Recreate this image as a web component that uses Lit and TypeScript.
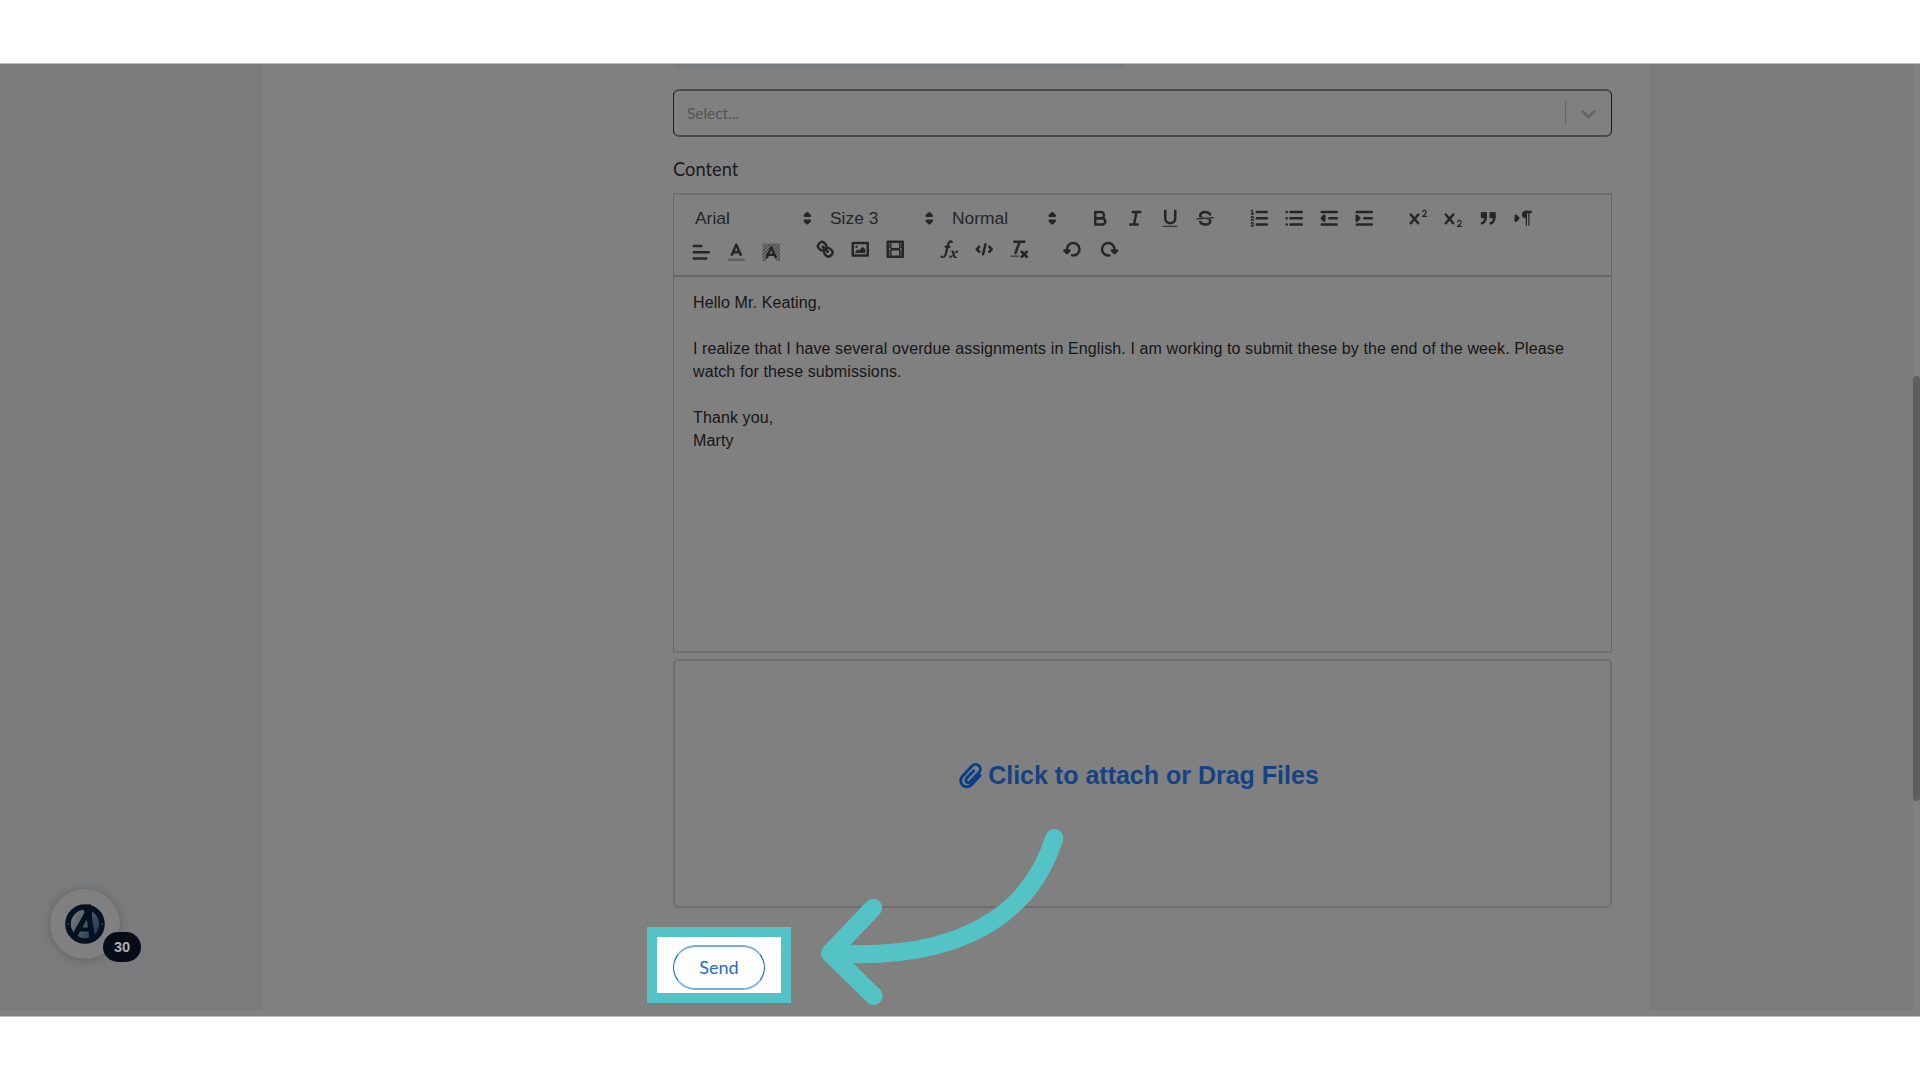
import { LitElement, html, css, svg, SVGTemplateResult } from "lit";
import { customElement, property } from "lit/decorators.js";

const superX =
  "M9.651,5.241a1,1,0,0,0-1.41.108L6,7.964,3.759,5.349a1,1,0,1,0-1.519,1.3L4.683,9.5,2.241,12.35a1,1,0,1,0,1.519,1.3L6,11.036,8.241,13.65a1,1,0,0,0,1.519-1.3L7.317,9.5,9.759,6.651A1,1,0,0,0,9.651,5.241Z";

const icons: Record<string, SVGTemplateResult> = {
  bold: svg`<path class="s" d="M5,4H9.5A2.5,2.5,0,0,1,12,6.5v0A2.5,2.5,0,0,1,9.5,9H5V4Z"/><path class="s" d="M5,9h5.5A2.5,2.5,0,0,1,13,11.5v0A2.5,2.5,0,0,1,10.5,14H5V9Z"/>`,
  italic: svg`<path class="s" d="M7 4H13M5 14H11M8 14L10 4"/>`,
  underline: svg`<path class="s" d="M5,3V9a4.012,4.012,0,0,0,4,4H9a4.012,4.012,0,0,0,4-4V3"/><rect class="f soft" x="3" y="15" width="12" height="1" rx=".5"/>`,
  strike: svg`<path class="s t" d="M15.5 8.5L2.5 9.5"/><path class="f" d="M9.007,8C6.542,7.791,6,7.519,6,6.5,6,5.792,7.283,5,9,5c1.571,0,2.765.679,2.969,1.309a1,1,0,0,0,1.9-.617C13.356,4.106,11.354,3,9,3,6.2,3,4,4.538,4,6.5a3.2,3.2,0,0,0,.5,1.843Z"/><path class="f" d="M8.984,10C11.457,10.208,12,10.479,12,11.5c0,0.708-1.283,1.5-3,1.5-1.571,0-2.765-.679-2.969-1.309a1,1,0,1,0-1.9.617C4.644,13.894,6.646,15,9,15c2.8,0,5-1.538,5-3.5a3.2,3.2,0,0,0-.5-1.843Z"/>`,
  ordered: svg`<path class="s" d="M7 4H15M7 9H15M7 14H15"/><path class="s t" d="M2.5 5.5H4.5"/><path class="f" d="M3.5,6A0.5,0.5,0,0,1,3,5.5V3.085l-0.276.138A0.5,0.5,0,0,1,2.053,3c-0.124-.247-0.023-0.324.224-0.447l1-.5A0.5,0.5,0,0,1,4,2.5v3A0.5,0.5,0,0,1,3.5,6Z"/><path class="s t" d="M4.5,10.5h-2c0-.234,1.85-1.076,1.85-2.234A0.959,0.959,0,0,0,2.5,8.156"/><path class="s t" d="M2.5,14.846a0.959,0.959,0,0,0,1.85-.109A0.7,0.7,0,0,0,3.75,14a0.688,0.688,0,0,0,.6-0.736,0.959,0.959,0,0,0-1.85-.109"/>`,
  bullet: svg`<path class="s" d="M6 4H15M6 9H15M6 14H15M3 4H3.01M3 9H3.01M3 14H3.01"/>`,
  outdent: svg`<path class="s" d="M3 14H15M3 4H15M9 9H15"/><path class="s f" d="M5 7V11L3 9Z"/>`,
  indent: svg`<path class="s" d="M3 14H15M3 4H15M9 9H15"/><path class="s f" d="M3 7V11L5 9Z"/>`,
  sup: svg`<path class="f" d="M15.5,7H13.861a4.015,4.015,0,0,0,1.914-2.975,1.8,1.8,0,0,0-1.6-1.751A1.922,1.922,0,0,0,12.021,3.7a0.5,0.5,0,1,0,.957.291,0.917,0.917,0,0,1,1.053-.725,0.81,0.81,0,0,1,.744.762c0,1.077-1.164,1.925-1.934,2.486A1.423,1.423,0,0,0,12,7.5a0.5,0.5,0,0,0,.5.5h3A0.5,0.5,0,0,0,15.5,7Z"/><path class="f" d="${superX}"/>`,
  sub: svg`<path class="f" transform="translate(0 8)" d="M15.5,7H13.861a4.015,4.015,0,0,0,1.914-2.975,1.8,1.8,0,0,0-1.6-1.751A1.922,1.922,0,0,0,12.021,3.7a0.5,0.5,0,1,0,.957.291,0.917,0.917,0,0,1,1.053-.725,0.81,0.81,0,0,1,.744.762c0,1.077-1.164,1.925-1.934,2.486A1.423,1.423,0,0,0,12,7.5a0.5,0.5,0,0,0,.5.5h3A0.5,0.5,0,0,0,15.5,7Z"/><path class="f" d="${superX}"/>`,
  quote: svg`<rect class="s f" x="4" y="5" width="3" height="3"/><rect class="s f" x="11" y="5" width="3" height="3"/><path class="s f" d="M7,8c0,4.031-3,5-3,5"/><path class="s f" d="M14,8c0,4.031-3,5-3,5"/>`,
  direction: svg`<path class="s f" d="M3 11L5 9L3 7Z"/><path class="s" d="M15 4H11"/><path class="f" d="M11,3a3,3,0,0,0,0,6h1V3H11Z"/><rect class="f" x="11" y="4" width="1" height="11"/><rect class="f" x="13" y="4" width="1" height="11"/>`,
  align: svg`<path class="s" d="M3 9H15M3 14H13M3 4H9"/>`,
  color: svg`<path class="s faint" d="M3 15H15"/><path class="s" d="M5.5 11L9 3L12.5 11M11.63 9H6.38"/>`,
  background: svg`<defs><pattern id="hatch" width="2.6" height="2.6" patternUnits="userSpaceOnUse"><path d="M-.65 .65L.65 -.65M0 2.6L2.6 0M1.95 3.25L3.25 1.95" stroke="#2b2b2b" stroke-width=".7"/></pattern></defs><path fill="url(#hatch)" d="M2 2H16V16H13.2L10.5 5H7.5L4.800 16H2Z"/><path class="s" d="M5.5 13L9 5L12.5 13M11.63 11H6.38"/>`,
  link: svg`<path class="s" d="M7 7L11 11"/><path class="s" d="M8.9,4.577a3.476,3.476,0,0,1,.36,4.679A3.476,3.476,0,0,1,4.577,8.9C3.185,7.5,2.035,6.4,4.217,4.217S7.5,3.185,8.9,4.577Z"/><path class="s" d="M13.423,9.1a3.476,3.476,0,0,0-4.679-.36,3.476,3.476,0,0,0,.36,4.679c1.392,1.392,2.5,2.542,4.679.36S14.815,10.5,13.423,9.1Z"/>`,
  image: svg`<rect class="s" x="3" y="4" width="12" height="10"/><circle class="f" cx="6" cy="7" r="1"/><path class="f" d="M5 12V11L7 9L8 10L11 7L13 9V12Z"/>`,
  video: svg`<rect class="s" x="3" y="3" width="12" height="12"/><path class="f" d="M5 3h1v12h-1zM12 3h1v12h-1zM5 8h8v2h-8zM3 5h3v1h-3zM3 7h3v1h-3zM3 10h3v1h-3zM3 12h3v1h-3zM12 5h3v1h-3zM12 7h3v1h-3zM12 10h3v1h-3zM12 12h3v1h-3z"/>`,
  formula: svg`<path class="f" d="M11.759,2.482a2.561,2.561,0,0,0-3.53.607A7.656,7.656,0,0,0,6.8,6.2C6.109,9.188,5.275,14.677,4.15,14.927a1.545,1.545,0,0,0-1.3-.933A0.922,0.922,0,0,0,2,15.036S1.954,16,4.119,16s3.091-2.691,3.7-5.553c0.177-.826.36-1.726,0.554-2.6L8.775,6.2c0.381-1.421.807-2.521,1.306-2.676a1.014,1.014,0,0,0,1.02.56A0.966,0.966,0,0,0,11.759,2.482Z"/><rect class="f" x="5.15" y="6.2" width="5" height="1.6" rx=".8"/><path class="f" d="M13.663,12.027a1.662,1.662,0,0,1,.266-0.276q0.193,0.069.456,0.138a2.1,2.1,0,0,0,.535.069,1.075,1.075,0,0,0,.767-0.3,1.044,1.044,0,0,0,.314-0.8,0.84,0.84,0,0,0-.238-0.619,0.8,0.8,0,0,0-.594-0.239,1.154,1.154,0,0,0-.781.3,4.607,4.607,0,0,0-.781,1q-0.091.15-.218,0.346l-0.246.38c-0.068-.288-0.137-0.582-0.212-0.885-0.459-1.847-2.494-.984-2.941-0.8-0.482.2-.353,0.647-0.094,0.529a0.869,0.869,0,0,1,1.281.585c0.217,0.751.377,1.436,0.527,2.038a5.688,5.688,0,0,1-.362.467,2.69,2.69,0,0,1-.264.271q-0.221-.08-0.471-0.147a2.029,2.029,0,0,0-.522-0.066,1.079,1.079,0,0,0-.768.3A1.058,1.058,0,0,0,9,15.131a0.82,0.82,0,0,0,.832.852,1.134,1.134,0,0,0,.787-0.3,5.11,5.11,0,0,0,.776-0.993q0.141-.219.215-0.34c0.046-.076.122-0.194,0.223-0.346a2.786,2.786,0,0,0,.918,1.726,2.582,2.582,0,0,0,2.376-.185c0.317-.181.212-0.565,0-0.494A0.807,0.807,0,0,1,14.176,15a5.159,5.159,0,0,1-.913-2.446l0,0Q13.487,12.24,13.663,12.027Z"/>`,
  code: svg`<path class="s" d="M5 7L3 9L5 11M13 7L15 9L13 11M10 5L8 13"/>`,
  clean: svg`<path class="s" d="M5 3H13M6 12L9.35 3M11 11L15 15M15 11L11 15"/><rect class="f soft" x="2" y="14" width="7" height="1" rx=".5"/>`,
  undo: svg`<path class="s f" d="M6 10L4 12L2 10Z"/><path class="s" d="M8.09,13.91A4.6,4.6,0,0,0,9,14,5,5,0,1,0,4,9"/>`,
  redo: svg`<path class="s f" d="M12 10L14 12L16 10Z"/><path class="s" d="M9.91,13.91A4.6,4.6,0,0,1,9,14a5,5,0,1,1,5-5"/>`,
  updown: svg`<path class="s f" d="M7 11L9 13L11 11ZM7 7L9 5L11 7Z"/>`,
};

@customElement("tool-icon")
export class ToolIcon extends LitElement {
  @property() name = "";
  static styles = css`
    :host { display: flex; justify-content: center; align-items: center; width: 35px; height: 30px; }
    svg { width: 22.5px; height: 22.5px; display: block; }
    .s { stroke: #262626; stroke-width: 2; stroke-linecap: round; stroke-linejoin: round; fill: none; }
    .f { fill: #262626; }
    .t { stroke-width: 1; }
    .soft { fill: #383838; }
    .faint { stroke: #606060; stroke-width: 2; }
  `;
  render() {
    return html`<svg viewBox="0 0 18 18">${icons[this.name]}</svg>`;
  }
}

@customElement("editor-toolbar")
export class EditorToolbar extends LitElement {
  static styles = css`
    :host { display: block; height: 82px; box-sizing: border-box; padding: 8px 0 0 10px; border: 1px solid #686868; border-top: 2px solid #707070; border-bottom: none; }
    .row { display: flex; align-items: center; height: 30px; }
    .row.second { margin-top: 1px; }
    .group { display: flex; margin-right: 19px; }
    .pickers { display: flex; width: 399px; }
    .picker { display: flex; flex: none; align-items: center; justify-content: space-between; box-sizing: border-box; height: 30px; padding-left: 11px; font: 17.4px "Liberation Sans", Arial, sans-serif; color: #262626; }
    .picker.font { width: 135px; }
    .picker.size { width: 122px; }
    .picker.head { width: 123px; }
    .picker tool-icon { margin-right: -6px; }
    .low { position: relative; top: 3px; }
  `;
  private group(names: string[], low = false) {
    return html`<div class="group ${low ? "low" : ""}">${names.map((n) => html`<tool-icon name=${n}></tool-icon>`)}</div>`;
  }
  render() {
    return html`
      <div class="row">
        <div class="pickers">
          <div class="picker font"><span>Arial</span><tool-icon name="updown"></tool-icon></div>
          <div class="picker size"><span>Size 3</span><tool-icon name="updown"></tool-icon></div>
          <div class="picker head"><span>Normal</span><tool-icon name="updown"></tool-icon></div>
        </div>
        ${this.group(["bold", "italic", "underline", "strike"])}
        ${this.group(["ordered", "bullet", "outdent", "indent"])}
        ${this.group(["sup", "sub", "quote", "direction"])}
      </div>
      <div class="row second">
        ${this.group(["align", "color", "background"], true)}
        ${this.group(["link", "image", "video"])}
        ${this.group(["formula", "code", "clean"])}
        ${this.group(["undo", "redo"])}
      </div>`;
  }
}

@customElement("app-root")
export class AppRoot extends LitElement {
  static styles = css`
    :host { display: block; width: 1920px; height: 1080px; overflow: hidden; background: #fff; box-sizing: border-box; padding-top: 63px; font-family: "Liberation Sans", Arial, sans-serif; }
    .page { position: relative; display: grid; grid-template-columns: 263px 348px 1fr 264px 7px; height: 954px; box-sizing: border-box; background: #808080; border-top: 1px solid #bdbdbd; border-bottom: 1px solid #bdbdbd; }
    .gutter { background: #7a7b7d; height: 946px; }
    .side { border-right: 1px solid #7a7a7a; }
    .main { padding: 0 37px 0 62px; }
    .strip { width: 451px; height: 5px; border-radius: 0 0 5px 5px; background: #7a7b7d; }
    .select { display: flex; align-items: center; box-sizing: border-box; height: 48px; margin-top: 20px; padding-left: 13px; border: 1px solid #1c1c1e; border-width: 2px 1px; border-color: #4b4b4b #1c1c1e; border-radius: 6px; font: 15.4px Lato, sans-serif; color: #545454; }
    .select .bar { width: 1px; height: 25px; margin-left: auto; background: #686868; }
    .select svg { width: 25px; height: 25px; margin: 0 10px; }
    .label { height: 26px; margin: 19px 0 11px; font: 18.3px/26px Lato, sans-serif; color: #1a1b1c; }
    .body { height: 378px; box-sizing: border-box; border: 1px solid #686868; border-top: 2px solid #686868; border-bottom: 2px solid #707070; padding: 14px 19px; font-size: 16px; letter-spacing: 0.112px; line-height: 23px; color: #161616; white-space: pre; }
    .drop { display: flex; align-items: center; justify-content: center; gap: 6px; box-sizing: border-box; height: 249px; margin-top: 6px; padding: 0 8px 17px 0; border: 2px solid #6f6f6f; border-radius: 5px; color: #144384; font-weight: bold; font-size: 25px; white-space: nowrap; }
    .drop svg { width: 24px; height: 27px; }
    .focus { position: relative; display: flex; align-items: center; justify-content: center; box-sizing: border-box; width: 144px; height: 76px; margin: 19px 0 0 -26px; padding-top: 4px; border: 10px solid #54c3c6; background: #fff; }
    .send { box-sizing: border-box; width: 92px; height: 45px; border: 1px solid #1d6fd6; border-width: 2px 1px; border-color: #78abe6 #1766cc; border-radius: 23px; background: #fff; color: #1a6bd4; font: 18px Lato, sans-serif; padding: 0 0 1px; }
    .thumb { height: 425px; margin-top: 312px; border-radius: 4px; background: #5e5e5e; }
    .arrow { position: absolute; left: 810px; top: 752px; width: 270px; height: 200px; }
    .chat { position: absolute; left: 50px; top: 825px; display: flex; align-items: center; justify-content: center; width: 70px; height: 70px; border-radius: 50%; background: #808080; box-shadow: 0 1px 8px rgba(0, 0, 0, 0.22); }
    .chat svg { width: 40px; height: 40px; }
    .count { position: absolute; left: 53px; top: 43px; width: 38px; height: 30px; line-height: 30px; border-radius: 15px; background: #080c16; color: #b0b0b0; text-align: center; font-weight: bold; font-size: 14.6px; }
  `;
  render() {
    return html`
      <div class="page">
        <div class="gutter"></div>
        <div class="side"></div>
        <div class="main">
          <div class="strip"></div>
          <div class="select">
            <span>Select...</span>
            <span class="bar"></span>
            <svg viewBox="0 0 20 20" fill="#666"><path d="M4.516 7.548c0.436-0.446 1.043-0.481 1.576 0l3.908 3.747 3.908-3.747c0.533-0.481 1.141-0.446 1.574 0 0.436 0.445 0.408 1.197 0 1.615-0.406 0.418-4.695 4.502-4.695 4.502-0.217 0.223-0.502 0.335-0.787 0.335s-0.57-0.112-0.789-0.335c0 0-4.287-4.084-4.695-4.502s-0.436-1.17 0-1.615z"/></svg>
          </div>
          <div class="label">Content</div>
          <editor-toolbar></editor-toolbar>
          <div class="body">Hello Mr. Keating,<br><br>I realize that I have several overdue assignments in English. I am working to submit these by the end of the week. Please<br>watch for these submissions.<br><br>Thank you,<br>Marty</div>
          <div class="drop">
            <svg viewBox="0 0 24 27" fill="none" stroke="#063f87" stroke-width="2.9" stroke-linecap="round" stroke-linejoin="round"><path d="M22 13.500L13.500 22.800A6 6 0 0 1 4.300 14.500L14 4A4.700 4.700 0 0 1 21.200 10.200L12.200 19.800A2.400 2.400 0 0 1 8.300 16.600L15.600 8.900"/></svg>
            <span>Click to attach or Drag Files</span>
          </div>
          <div class="focus"><button class="send">Send</button></div>
        </div>
        <div class="gutter"></div>
        <div><div class="thumb"></div></div>
        <svg class="arrow" viewBox="810 816 270 200" fill="none" stroke="#54c3c6" stroke-width="18" stroke-linecap="round" stroke-linejoin="round"><path d="M1054.300 838C1038 890 990 963 830 953.300M873.300 907.700L830 953.300L873.700 996"/></svg>
        <div class="chat">
          <svg viewBox="0 0 40 40">
            <defs><linearGradient id="sky" x1="0" y1="0" x2="1" y2="0.600"><stop offset="0.100" stop-color="#7c7e80"/><stop offset=".5" stop-color="#56616f"/><stop offset="1" stop-color="#1c3558"/></linearGradient></defs>
            <circle cx="20" cy="20" r="17" fill="url(#sky)" stroke="#04121f" stroke-width="5.600"/>
            <path d="M9.500 32L23.500 7L27 33" fill="none" stroke="#04121f" stroke-width="5.500"/>
            <path d="M14 25.500H26" stroke="#04121f" stroke-width="4"/>
            <path d="M18 4H27L27 10H20Z" fill="#04121f"/>
            <circle cx="3" cy="20" r=".8" fill="#5c6470"/><circle cx="37" cy="20" r=".8" fill="#5c6470"/>
          </svg>
          <div class="count">30</div>
        </div>
      </div>`;
  }
}
